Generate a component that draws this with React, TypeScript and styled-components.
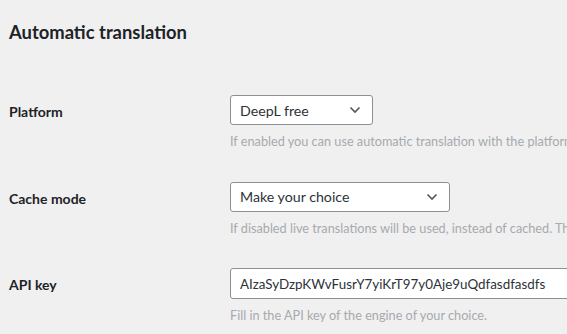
import React from "react";
import styled, { createGlobalStyle } from "styled-components";

const GlobalStyle = createGlobalStyle`
  html, body {
    margin: 0;
    padding: 0;
    background: #f0f0f1;
    overflow: hidden;
  }
  body {
    font-family: Lato, "Open Sans", sans-serif;
    color: #1d2327;
  }
`;

const Wrap = styled.div`
  box-sizing: border-box;
  padding: 0 0 0 9px;
  width: 567px;
  height: 334px;
  overflow: hidden;
`;

const Title = styled.h2`
  margin: 0;
  padding: 20px 0 0;
  font-size: 18.4px;
  font-weight: 700;
  line-height: 24px;
  color: #1d2327;
`;

const Table = styled.div`
  margin-top: 51px;
  display: flex;
  flex-direction: column;
`;

const Row = styled.div`
  display: grid;
  grid-template-columns: 221px 1fr;
  height: 86.5px;
`;

const Label = styled.label`
  font-size: 14px;
  font-weight: 700;
  padding-top: 7px;
  line-height: 20px;
`;

const Field = styled.div`
  display: flex;
  flex-direction: column;
  min-width: 0;
`;

const SelectBox = styled.div<{ $width: number }>`
  box-sizing: border-box;
  width: ${(p) => p.$width}px;
  height: 30px;
  border: 1px solid #8c8f94;
  border-radius: 3px;
  background: #fff;
  display: flex;
  align-items: center;
  justify-content: space-between;
  padding: 0 11px 0 9px;
  font-size: 14.2px;
  color: #2c3338;
`;

const TextInput = styled.div`
  box-sizing: border-box;
  width: 400px;
  height: 31px;
  border: 1px solid #8c8f94;
  border-radius: 3px;
  background: #fff;
  display: flex;
  align-items: center;
  padding: 0 9px;
  font-size: 13.4px;
  color: #2c3338;
  white-space: nowrap;
`;

const Description = styled.p`
  margin: 7px 0 0;
  font-size: 12.7px;
  line-height: 18px;
  color: #a7aaad;
  white-space: nowrap;
`;

const Chevron = () => (
  <svg width="12" height="8" viewBox="0 0 12 8" fill="none">
    <path d="M1.5 1.5L6 6L10.5 1.5" stroke="#50575e" strokeWidth="1.6" />
  </svg>
);

const rows = [
  {
    label: "Platform",
    kind: "select",
    value: "DeepL free",
    width: 143,
    hint: "If enabled you can use automatic translation with the platform of your choice.",
  },
  {
    label: "Cache mode",
    kind: "select",
    value: "Make your choice",
    width: 220,
    hint: "If disabled live translations will be used, instead of cached. This costs more credits.",
  },
  {
    label: "API key",
    kind: "input",
    value: "AIzaSyDzpKWvFusrY7yiKrT97y0Aje9uQdfasdfasdfs",
    width: 400,
    hint: "Fill in the API key of the engine of your choice.",
  },
];

export default function App() {
  return (
    <Wrap>
      <GlobalStyle />
      <Title>Automatic translation</Title>
      <Table>
        {rows.map((r) => (
          <Row key={r.label}>
            <Label>{r.label}</Label>
            <Field>
              {r.kind === "select" ? (
                <SelectBox $width={r.width}>
                  <span>{r.value}</span>
                  <Chevron />
                </SelectBox>
              ) : (
                <TextInput>{r.value}</TextInput>
              )}
              <Description>{r.hint}</Description>
            </Field>
          </Row>
        ))}
      </Table>
    </Wrap>
  );
}
